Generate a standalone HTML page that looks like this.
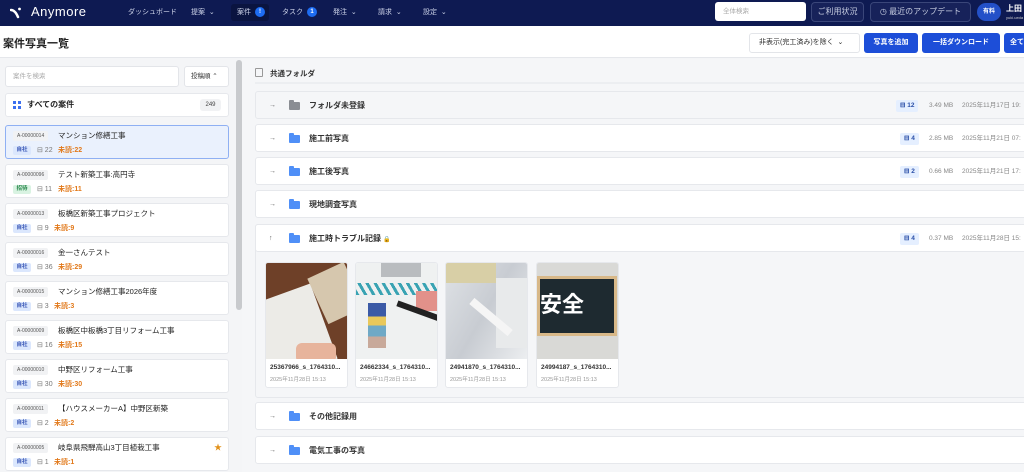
<!DOCTYPE html>
<html><head><meta charset="utf-8"><style>
*{box-sizing:border-box;margin:0;padding:0}
body{width:1024px;height:472px;overflow:hidden;font-family:"Liberation Sans","Noto Sans CJK JP",sans-serif;background:#f4f5f7;position:relative;color:#1f2937}
.abs{position:absolute}
.hdr{left:0;top:0;width:1024px;height:26px;background:#0e1a52}
.nav{top:0;height:26px;line-height:26px;font-size:7px;color:#cfd5ea}
.badge{display:inline-block;width:10px;height:10px;border-radius:50%;background:#1d6cf2;color:#fff;font-size:6px;line-height:10px;text-align:center;font-weight:bold;vertical-align:middle;margin-left:4px}
.hbtn{top:2px;height:20px;border:1px solid #3a4679;border-radius:4px;color:#c6cce0;font-size:8px;line-height:18px;text-align:center;background:#17225a}
.title{left:0;top:26px;width:1024px;height:32px;background:#fff;border-bottom:1px solid #e5e7eb}
.btn{top:33px;height:20px;background:#1d4ed8;color:#fff;font-size:7px;font-weight:bold;line-height:20px;text-align:center;border-radius:3px}
.left{left:0;top:59px;width:242px;height:413px;background:#f4f5f7}
.card{left:5px;width:224px;height:34px;background:#fff;border:1px solid #e6e8ec;border-radius:3px}
.code{position:absolute;left:7px;top:5px;height:10px;padding:0 4px;background:#f1f2f4;font-size:5px;line-height:10px;color:#555;border-radius:2px}
.nm{position:absolute;left:52px;top:5px;font-size:7.5px;line-height:10px;color:#222}
.tag{position:absolute;left:7px;top:20px;height:9px;width:18px;background:#dbe7fd;color:#3856b6;font-size:5.5px;line-height:9px;text-align:center;border-radius:2px;font-weight:bold}
.cnt{position:absolute;left:31px;top:20px;font-size:7px;line-height:9px;color:#777}
.un{position:absolute;top:20px;font-size:7px;line-height:9px;color:#e2791a;font-weight:bold}
.row{left:255px;width:790px;height:28px;background:#fff;border:1px solid #e6e8ec;border-radius:3px}
.row .ar{position:absolute;left:13px;top:8px;font-size:7px;color:#666;line-height:11px}
.fold{position:absolute;left:33px;top:10px;width:11px;height:8px;background:#4f8ff7;border-radius:1px}
.fold:before{content:"";position:absolute;left:0;top:-2px;width:5px;height:3px;background:inherit;border-radius:1px 1px 0 0}
.row .fn{position:absolute;left:53px;top:8px;font-size:8px;font-weight:bold;color:#333;line-height:11px}
.pc{position:absolute;top:8px;height:12px;padding:0 4px;background:#e5efff;color:#2a4fa8;font-size:6.5px;line-height:12px;font-weight:bold;border-radius:2px}
.sz{position:absolute;top:8px;font-size:6.5px;line-height:12px;color:#888}
.dt{position:absolute;left:706px;top:8px;font-size:6.5px;line-height:12px;color:#888;white-space:nowrap}
.ph{top:262px;width:83px;height:126px;background:#fff;border:1px solid #e6e8ec;border-radius:3px;overflow:hidden}
.ph .im{position:relative;height:96px;overflow:hidden}
.ph .a{position:absolute;left:4px;top:101px;font-size:6.5px;font-weight:bold;color:#333}
.ph .b{position:absolute;left:4px;top:112px;font-size:5.5px;color:#999}
</style></head><body>
<div class="abs hdr"></div>
<div class="abs" style="left:10px;top:6px;width:12px;height:12px">
<svg width="12" height="12" viewBox="0 0 12 12"><path d="M1 3 Q5 3 8 10" stroke="#fff" stroke-width="2.5" fill="none" stroke-linecap="round"/><circle cx="9.5" cy="2" r="1.4" fill="#fff"/></svg></div>
<div class="abs" style="left:31px;top:4px;font-size:13px;color:#fff;letter-spacing:.5px">Anymore</div>
<div class="abs nav" style="left:128px">ダッシュボード</div>
<div class="abs nav" style="left:191px">提案 &nbsp;⌄</div>
<div class="abs" style="left:231px;top:4px;width:38px;height:17px;background:#0a1440;border-radius:3px"></div>
<div class="abs nav" style="left:237px">案件<span class="badge">!</span></div>
<div class="abs nav" style="left:282px">タスク<span class="badge">1</span></div>
<div class="abs nav" style="left:333px">発注 &nbsp;⌄</div>
<div class="abs nav" style="left:378px">請求 &nbsp;⌄</div>
<div class="abs nav" style="left:423px">設定 &nbsp;⌄</div>
<div class="abs" style="left:715px;top:2px;width:91px;height:19px;background:#fff;border-radius:3px;font-size:6.5px;color:#aaa;line-height:19px;padding-left:8px">全体検索</div>
<div class="abs hbtn" style="left:811px;width:53px">ご利用状況</div>
<div class="abs hbtn" style="left:870px;width:101px">◷ 最近のアップデート</div>
<div class="abs" style="left:977px;top:3px;width:24px;height:18px;border-radius:9px;background:#2350c8;color:#fff;font-size:6px;font-weight:bold;line-height:18px;text-align:center">有料</div>
<div class="abs" style="left:1006px;top:3px;font-size:8px;color:#fff;font-weight:bold">上田</div>
<div class="abs" style="left:1006px;top:15px;font-size:4px;color:#ccc">yuki.ueda</div>
<div class="abs title"></div>
<div class="abs" style="left:3px;top:35px;font-size:11px;font-weight:bold;color:#222">案件写真一覧</div>
<div class="abs" style="left:749px;top:33px;width:111px;height:20px;border:1px solid #e3e5e9;border-radius:3px;background:#fff;font-size:7px;line-height:18px;color:#333;padding-left:9px">非表示(完工済み)を除く &nbsp;⌄</div>
<div class="abs btn" style="left:864px;width:54px">写真を追加</div>
<div class="abs btn" style="left:922px;width:78px">一括ダウンロード</div>
<div class="abs btn" style="left:1004px;width:30px;text-align:left;padding-left:6px">全て</div>
<div class="abs left"></div>
<div class="abs" style="left:236px;top:60px;width:6px;height:250px;background:#c8cacd;border-radius:3px"></div>
<div class="abs" style="left:5px;top:66px;width:174px;height:21px;background:#fff;border:1px solid #e3e5e9;border-radius:3px;font-size:6.5px;color:#aaa;line-height:19px;padding-left:7px">案件を検索</div>
<div class="abs" style="left:184px;top:66px;width:45px;height:21px;background:#fff;border:1px solid #e3e5e9;border-radius:3px;font-size:6.5px;color:#333;line-height:19px;padding-left:6px">投稿順 ⌃</div>
<div class="abs" style="left:5px;top:93px;width:224px;height:24px;background:#fff;border:1px solid #e6e8ec;border-radius:3px"></div>
<div class="abs" style="left:13px;top:101px;width:3px;height:3px;background:#3b6ff0"></div>
<div class="abs" style="left:18px;top:101px;width:3px;height:3px;background:#3b6ff0"></div>
<div class="abs" style="left:13px;top:106px;width:3px;height:3px;background:#3b6ff0"></div>
<div class="abs" style="left:18px;top:106px;width:3px;height:3px;background:#3b6ff0"></div>
<div class="abs" style="left:27px;top:99px;font-size:8px;font-weight:bold;color:#222">すべての案件</div>
<div class="abs" style="left:200px;top:99px;width:21px;height:12px;background:#f1f2f4;border-radius:3px;font-size:6px;line-height:12px;text-align:center;color:#444">249</div>

<div class="abs card" style="top:125px;background:#eaf1fd;border-color:#8fb0f3"><span class="code">A-00000014</span><span class="nm">マンション修繕工事</span><span class="tag">自社</span><span class="cnt">⊟ 22</span><span class="un" style="left:52px">未読:22</span></div>
<div class="abs card" style="top:164px"><span class="code">A-00000096</span><span class="nm">テスト新築工事:高円寺</span><span class="tag" style="background:#d9f3e2;color:#2c8a4e">招待</span><span class="cnt">⊟ 11</span><span class="un" style="left:52px">未読:11</span></div>
<div class="abs card" style="top:203px"><span class="code">A-00000013</span><span class="nm">板橋区新築工事プロジェクト</span><span class="tag">自社</span><span class="cnt">⊟ 9</span><span class="un" style="left:48px">未読:9</span></div>
<div class="abs card" style="top:242px"><span class="code">A-00000016</span><span class="nm">金一さんテスト</span><span class="tag">自社</span><span class="cnt">⊟ 36</span><span class="un" style="left:52px">未読:29</span></div>
<div class="abs card" style="top:281px"><span class="code">A-00000015</span><span class="nm">マンション修繕工事2026年度</span><span class="tag">自社</span><span class="cnt">⊟ 3</span><span class="un" style="left:48px">未読:3</span></div>
<div class="abs card" style="top:320px"><span class="code">A-00000009</span><span class="nm">板橋区中板橋3丁目リフォーム工事</span><span class="tag">自社</span><span class="cnt">⊟ 16</span><span class="un" style="left:52px">未読:15</span></div>
<div class="abs card" style="top:359px"><span class="code">A-00000010</span><span class="nm">中野区リフォーム工事</span><span class="tag">自社</span><span class="cnt">⊟ 30</span><span class="un" style="left:52px">未読:30</span></div>
<div class="abs card" style="top:398px"><span class="code">A-00000011</span><span class="nm">【ハウスメーカーA】中野区新築</span><span class="tag">自社</span><span class="cnt">⊟ 2</span><span class="un" style="left:48px">未読:2</span></div>
<div class="abs card" style="top:437px"><span class="code">A-00000005</span><span class="nm">岐阜県飛騨高山3丁目植栽工事</span><span class="tag">自社</span><span class="cnt">⊟ 1</span><span class="un" style="left:48px">未読:1</span><span style="position:absolute;left:208px;top:4px;color:#e2911a;font-size:8px">★</span></div>

<div class="abs" style="left:242px;top:59px;width:782px;height:413px;background:#f5f6f8"></div>
<div class="abs" style="left:255px;top:68px;width:8px;height:9px;border:1px solid #999;border-radius:1px"></div>
<div class="abs" style="left:270px;top:68px;font-size:7.5px;font-weight:bold;color:#333">共通フォルダ</div>
<div class="abs" style="left:255px;top:82px;width:790px;height:2px;background:#eceef1"></div>

<div class="abs row" style="top:91px;background:#f5f6f8"><span class="ar">→</span><span class="fold" style="background:#8a8d93"></span><span class="fn">フォルダ未登録</span><span class="pc" style="left:640px">⊟ 12</span><span class="sz" style="left:673px">3.49 MB</span><span class="dt">2025年11月17日 19:</span></div>
<div class="abs row" style="top:124px"><span class="ar">→</span><span class="fold"></span><span class="fn">施工前写真</span><span class="pc" style="left:644px">⊟ 4</span><span class="sz" style="left:673px">2.85 MB</span><span class="dt">2025年11月21日 07:</span></div>
<div class="abs row" style="top:157px"><span class="ar">→</span><span class="fold"></span><span class="fn">施工後写真</span><span class="pc" style="left:644px">⊟ 2</span><span class="sz" style="left:673px">0.66 MB</span><span class="dt">2025年11月21日 17:</span></div>
<div class="abs row" style="top:190px"><span class="ar">→</span><span class="fold"></span><span class="fn">現地調査写真</span></div>
<div class="abs row" style="top:224px;height:174px;background:#f5f6f8"></div>
<div class="abs row" style="top:224px"><span class="ar">↑</span><span class="fold"></span><span class="fn">施工時トラブル記録 <span style="color:#aaa;font-size:6px">🔒</span></span><span class="pc" style="left:644px">⊟ 4</span><span class="sz" style="left:673px">0.37 MB</span><span class="dt">2025年11月28日 15:</span></div>

<div class="abs ph" style="left:265px"><div class="im" style="background:#6e4028"><div style="position:absolute;left:-10px;top:30px;width:70px;height:80px;background:#ecebe7;transform:rotate(-20deg)"></div><div style="position:absolute;left:50px;top:5px;width:40px;height:50px;background:#d6c7ae;transform:rotate(-25deg)"></div><div style="position:absolute;left:30px;top:80px;width:40px;height:20px;background:#e7b49c;border-radius:6px"></div></div><span class="a">25367966_s_1764310...</span><span class="b">2025年11月28日 15:13</span></div>
<div class="abs ph" style="left:355px"><div class="im" style="background:#eff1f1"><div style="position:absolute;left:25px;top:0;width:40px;height:14px;background:#b9bcbf"></div><div style="position:absolute;left:0;top:20px;width:83px;height:12px;background:repeating-linear-gradient(60deg,#39a3b3 0 3px,#eff1f1 3px 7px)"></div><div style="position:absolute;left:12px;top:40px;width:18px;height:45px;background:linear-gradient(#3b5aa6 0 30%,#e9c85a 30% 50%,#6fa9c6 50% 75%,#c8a99a 75%)"></div><div style="position:absolute;left:60px;top:28px;width:22px;height:20px;background:#e2918a"></div><div style="position:absolute;left:40px;top:45px;width:45px;height:6px;background:#222;transform:rotate(20deg)"></div></div><span class="a">24662334_s_1764310...</span><span class="b">2025年11月28日 15:13</span></div>
<div class="abs ph" style="left:445px"><div class="im" style="background:linear-gradient(120deg,#dfe2e6,#c8ccd2 50%,#eceef0)"><div style="position:absolute;left:0;top:0;width:50px;height:20px;background:#d8cfa6"></div><div style="position:absolute;left:50px;top:15px;width:33px;height:70px;background:#e8eaeb"></div><div style="position:absolute;left:20px;top:50px;width:50px;height:8px;background:#f5f5f5;transform:rotate(40deg)"></div></div><span class="a">24941870_s_1764310...</span><span class="b">2025年11月28日 15:13</span></div>
<div class="abs ph" style="left:536px"><div class="im" style="background:#d9d9d6"><div style="position:absolute;left:0;top:13px;width:80px;height:60px;background:#1e2a30;border:3px solid #d8b888;color:#fff;font-size:22px;line-height:52px;text-align:left;font-weight:bold">安全</div></div><span class="a">24994187_s_1764310...</span><span class="b">2025年11月28日 15:13</span></div>

<div class="abs row" style="top:402px"><span class="ar">→</span><span class="fold"></span><span class="fn">その他記録用</span></div>
<div class="abs row" style="top:436px"><span class="ar">→</span><span class="fold"></span><span class="fn">電気工事の写真</span></div>
</body></html>
